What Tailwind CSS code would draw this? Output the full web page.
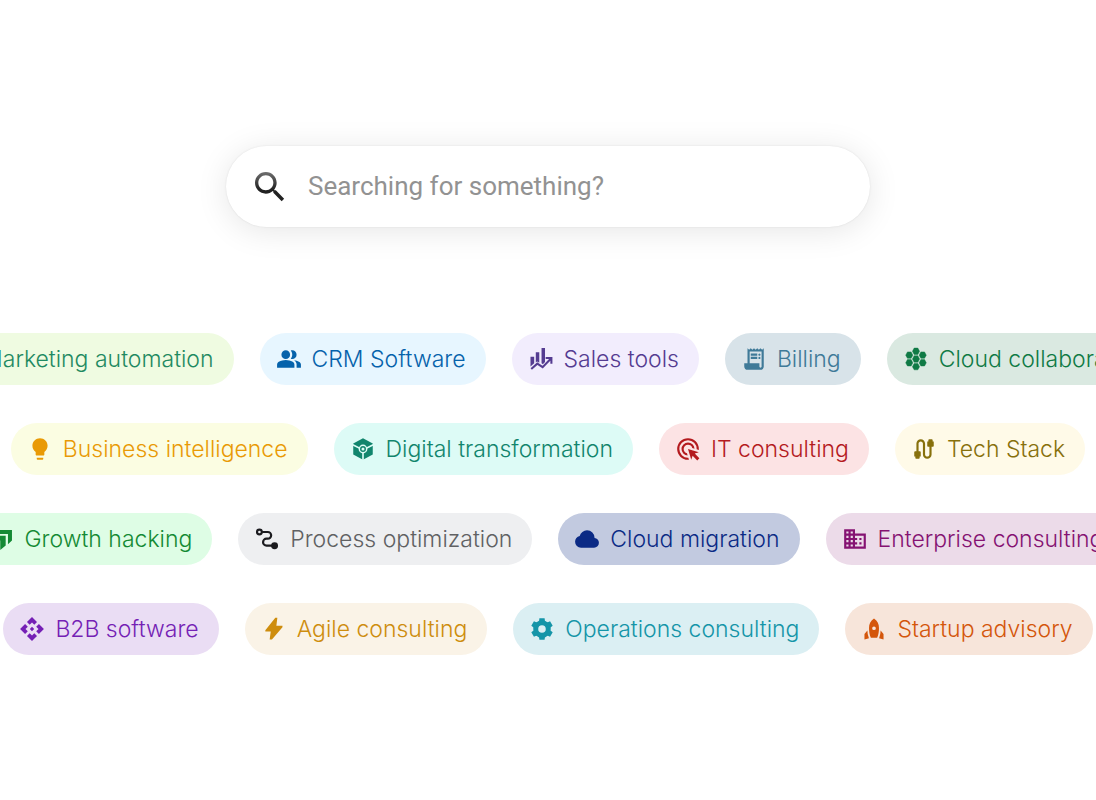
<!DOCTYPE html>
<html lang="en">
<head>
  <meta charset="UTF-8">
  <meta name="viewport" content="width=device-width, initial-scale=1.0">
  <title>Search</title>
  <script src="https://cdn.jsdelivr.net/npm/@tailwindcss/browser@4"></script>
</head>
<body class="bg-white min-h-screen overflow-x-hidden font-['Inter',sans-serif]">
  <main class="pt-[146px] pb-36">

    <!-- Search box -->
    <form class="mx-auto flex h-[81px] w-[644px] max-w-full items-center rounded-full bg-white pl-6 pr-8 shadow-[0_4px_32px_rgba(0,0,0,0.10),0_0_2px_rgba(0,0,0,0.10)]">
      <label for="search" class="shrink-0" aria-label="Search">
        <svg class="size-10" viewBox="0 0 24 24" fill="url(#glass)">
          <defs>
            <linearGradient id="glass" x1="0" y1="0" x2="0" y2="1">
              <stop offset="0" stop-color="#707070"/>
              <stop offset="0.6" stop-color="#222222"/>
            </linearGradient>
          </defs>
          <path d="M15.5 14h-.79l-.28-.27C15.41 12.59 16 11.11 16 9.5 16 5.91 13.09 3 9.5 3S3 5.91 3 9.5 5.91 16 9.5 16c1.61 0 3.09-.59 4.23-1.57l.27.28v.79l5 4.99L20.49 19l-4.99-5zm-6 0C7.01 14 5 11.99 5 9.5S7.01 5 9.5 5 14 7.01 14 9.5 11.99 14 9.5 14z"/>
        </svg>
      </label>
      <input id="search" type="text" placeholder="Searching for something?" class="ml-[18px] min-w-0 flex-1 bg-transparent font-['Roboto',sans-serif] text-[26px] text-[#333333] outline-none placeholder:text-[#929292]">
    </form>

    <!-- Categories -->
    <div class="mt-[106px] flex flex-col gap-[38px] overflow-hidden text-[23px] font-[350] whitespace-nowrap">
      <div class="flex justify-center gap-[26px]">
        <a href="#" class="flex h-[52px] shrink-0 items-center gap-2.5 rounded-full bg-[#effbe1] pl-4 pr-5 text-[#1f8a62]">
          <svg class="size-[26px]" viewBox="0 0 24 24" fill="currentColor"><path d="M18 13v-2h4v2zm1.200 7L16 17.600l1.200-1.600 3.200 2.400zM17.200 8 16 6.400 19.200 4l1.200 1.600zM5 19v-4H4q-.825 0-1.412-.587T2 13v-2q0-.825.588-1.412T4 9h4l5-3v12l-5-3H7v4zm9-3.650v-6.700q.675.600 1.088 1.463T15.500 12t-.412 1.888T14 15.350"/></svg>
          Marketing automation
        </a>
        <a href="#" class="flex h-[52px] shrink-0 items-center gap-2.5 rounded-full bg-[#e7f6ff] pl-4 pr-5 text-[#0562ab]">
          <svg class="size-[26px]" viewBox="0 0 24 24" fill="currentColor"><path d="M1 20v-2.800q0-.85.438-1.563T2.600 14.550q1.550-.775 3.150-1.162T9 13t3.250.388 3.150 1.162q.725.375 1.163 1.088T17 17.200V20zm18 0v-3q0-1.100-.612-2.113T16.650 13.150q1.275.15 2.400.513t2.100.887q.9.500 1.375 1.112T23 17v3zM9 12q-1.650 0-2.825-1.175T5 8t1.175-2.825T9 4t2.825 1.175T13 8t-1.175 2.825T9 12m10-4q0 1.650-1.175 2.825T15 12q-.275 0-.7-.062t-.7-.138q.675-.8 1.038-1.775T15 8t-.363-2.025T13.600 4.200q.35-.125.7-.163T15 4q1.650 0 2.825 1.175T19 8"/></svg>
          CRM Software
        </a>
        <a href="#" class="flex h-[52px] shrink-0 items-center gap-2.5 rounded-full bg-[#f2edfd] pl-4 pr-5 text-[#553c91]">
          <svg class="size-[26px]" viewBox="0 0 24 24" fill="currentColor"><path d="M2.300 10h3.400v6l-3.400 3zM7.200 5.800h3.200v9.700l-2-1.200-1.200.9zM12.500 1.800h3.200v13l-2 2-1.200-.8z"/><path d="m3 21.300 5.600-5 4.900 3.200 7.500-7.700M16.300 11h5.300v5.300" fill="none" stroke="currentColor" stroke-width="1.900"/></svg>
          Sales tools
        </a>
        <a href="#" class="flex h-[52px] shrink-0 items-center gap-2.5 rounded-full bg-[#d8e3e9] pl-4 pr-5 text-[#3f7a98]">
          <svg class="size-[26px]" viewBox="0 0 24 24" fill="currentColor"><path d="M6 22q-1.250 0-2.125-.875T3 19v-3h3V2l1.500 1.500L9 2l1.500 1.500L12 2l1.500 1.500L15 2l1.500 1.500L18 2l1.500 1.500L21 2v17q0 1.250-.875 2.125T18 22zm12-2q.425 0 .713-.288T19 19V5H8v11h9v3q0 .425.288.713T18 20M9 9V7h6v2zm0 3v-2h6v2zm8-3q-.425 0-.712-.288T16 8t.288-.712T17 7t.713.288T18 8t-.288.713T17 9m0 3q-.425 0-.712-.288T16 11t.288-.712T17 10t.713.288T18 11t-.288.713T17 12"/></svg>
          Billing
        </a>
        <a href="#" class="flex h-[52px] shrink-0 items-center gap-2.5 rounded-full bg-[#dae9e1] pl-4 pr-5 text-[#0f7a45]">
          <svg class="size-[26px]" viewBox="0 0 24 24" fill="currentColor"><path id="cell" d="M10.300 1.900h3.400L15.300 4.900 13.700 7.800h-3.400L8.700 4.900z" stroke="currentColor" stroke-width="0.400" stroke-linejoin="round"/><use href="#cell" y="7.100"/><use href="#cell" y="14.200"/><use href="#cell" x="-6.200" y="3.550"/><use href="#cell" x="6.200" y="3.550"/><use href="#cell" x="-6.200" y="10.650"/><use href="#cell" x="6.200" y="10.650"/></svg>
          Cloud collaboration
        </a>
      </div>

      <div class="flex justify-center gap-[26px]">
        <a href="#" class="flex h-[52px] shrink-0 items-center gap-2.5 rounded-full bg-[#fbfde2] pl-4 pr-5 text-[#e99a05]">
          <svg class="size-[26px]" viewBox="0 0 24 24" fill="currentColor"><path d="M9 21c0 .5.400 1 1 1h4c.6 0 1-.5 1-1v-1H9v1zm3-19C8.100 2 5 5.100 5 9c0 2.400 1.200 4.500 3 5.700V17c0 .5.400 1 1 1h6c.6 0 1-.5 1-1v-2.300c1.800-1.300 3-3.400 3-5.700 0-3.900-3.100-7-7-7z"/></svg>
          Business intelligence
        </a>
        <a href="#" class="flex h-[52px] shrink-0 items-center gap-2.5 rounded-full bg-[#ddfbf6] pl-4 pr-5 text-[#11856d]">
          <svg class="size-[26px]" viewBox="0 0 24 24" fill="currentColor"><path d="m12 2 9 5v10l-9 5-9-5V7z"/><path d="M2.500 8 12 12.800 21.500 8M12 12v10.500" fill="none" stroke="#ddfbf6" stroke-width="1.500"/><circle cx="12" cy="12" r="3.400" stroke="#ddfbf6" stroke-width="1.300"/><circle cx="12" cy="12" r="1.400" fill="#ddfbf6"/></svg>
          Digital transformation
        </a>
        <a href="#" class="flex h-[52px] shrink-0 items-center gap-2.5 rounded-full bg-[#fce3e4] pl-4 pr-5 text-[#b41a1e]">
          <svg class="size-[26px]" viewBox="0 0 24 24" fill="currentColor"><path d="M11.700 18q-2.400-.125-4.050-1.850T6 12q0-2.500 1.750-4.250T12 6q2.425 0 4.150 1.650T18 11.700l-2.100-.625q-.325-1.350-1.400-2.212T12 8q-1.650 0-2.825 1.175T8 12q0 1.425.863 2.500t2.212 1.400zm1.200 3.950q-.225.05-.45.05H12q-2.075 0-3.900-.788t-3.175-2.137T2.788 15.900 2 12t.788-3.900 2.137-3.175T8.100 2.788 12 2t3.900.788 3.175 2.137T21.213 8.100 22 12v.45q0 .225-.05.45L20 12.300V12q0-3.350-2.325-5.675T12 4 6.325 6.325 4 12t2.325 5.675T12 20h.3zm7.625.55-4.275-4.275L15 22l-3-10 10 3-3.775 1.250 4.275 4.275z"/></svg>
          IT consulting
        </a>
        <a href="#" class="flex h-[52px] shrink-0 items-center gap-2.5 rounded-full bg-[#fffae8] pl-4 pr-5 text-[#87700c]">
          <svg class="size-[26px]" viewBox="0 0 24 24" fill="currentColor"><path d="M20 5V4c0-.55-.45-1-1-1h-2c-.55 0-1 .45-1 1v1h-1v4c0 .55.450 1 1 1h1v7c0 1.100-.9 2-2 2s-2-.9-2-2V7c0-2.210-1.790-4-4-4S5 4.790 5 7v7H4c-.55 0-1 .45-1 1v4h1v1c0 .55.450 1 1 1h2c.55 0 1-.45 1-1v-1h1v-4c0-.55-.45-1-1-1H7V7c0-1.100.9-2 2-2s2 .9 2 2v10c0 2.210 1.790 4 4 4s4-1.790 4-4v-7h1c.55 0 1-.45 1-1V5h-1z"/></svg>
          Tech Stack
        </a>
      </div>

      <div class="flex justify-center gap-[26px]">
        <a href="#" class="flex h-[52px] shrink-0 items-center gap-2.5 rounded-full bg-[#defde5] pl-4 pr-5 text-[#148a34]">
          <svg class="size-[26px]" viewBox="0 0 24 24" fill="currentColor"><path d="M8 3.700h13.200v9.600l-3.700 3.500V7.400H4.300zM2.500 8.900h12.900v9l-5 4.300v-8.800H2.500z"/></svg>
          Growth hacking
        </a>
        <a href="#" class="flex h-[52px] shrink-0 items-center gap-2.5 rounded-full bg-[#eeeff1] pl-4 pr-5 text-[#606163]">
          <svg class="size-[26px] text-[#1b1b1f]" viewBox="0 0 24 24" fill="none" stroke="currentColor" stroke-width="2"><circle cx="5" cy="5.500" r="2.200"/><path d="M7.500 5.500h5.250a3.100 3.100 0 0 1 0 6.200h-1.200a3.200 3.200 0 0 0 0 6.400H17"/><circle cx="19" cy="18.200" r="2.200" fill="currentColor"/></svg>
          Process optimization
        </a>
        <a href="#" class="flex h-[52px] shrink-0 items-center gap-2.5 rounded-full bg-[#c2cae0] pl-4 pr-5 text-[#0b2a85]">
          <svg class="size-[26px]" viewBox="0 0 24 24" fill="currentColor"><path d="M6.500 20q-2.275 0-3.887-1.575T1 14.575q0-1.950 1.175-3.475T5.250 9.150q.625-2.300 2.500-3.725T12 4q2.925 0 4.963 2.038T19 11q1.725.2 2.863 1.488T23 15.500q0 1.875-1.312 3.188T18.500 20z"/></svg>
          Cloud migration
        </a>
        <a href="#" class="flex h-[52px] shrink-0 items-center gap-2.5 rounded-full bg-[#ecdbe9] pl-4 pr-5 text-[#851272]">
          <svg class="size-[26px]" viewBox="0 0 24 24" fill="currentColor"><path d="M2 21V3h10v4h10v14zm2-2h2v-2H4zm0-4h2v-2H4zm0-4h2V9H4zm0-4h2V5H4zm4 12h2v-2H8zm0-4h2v-2H8zm0-4h2V9H8zm0-4h2V5H8zm4 12h8V9h-8v2h2v2h-2v2h2v2h-2zm4-6v-2h2v2zm0 4v-2h2v2z"/></svg>
          Enterprise consulting
        </a>
      </div>

      <div class="flex justify-center gap-[26px]">
        <a href="#" class="flex h-[52px] shrink-0 items-center gap-2.5 rounded-full bg-[#eaddf4] pl-4 pr-5 text-[#751fb5]">
          <svg class="size-[26px]" viewBox="0 0 24 24" fill="currentColor"><path d="M14 12l-2 2-2-2 2-2 2 2zm-2-6 2.120 2.120 2.500-2.500L12 1 7.380 5.620l2.500 2.500L12 6zm-6 6 2.120-2.120-2.500-2.500L1 12l4.620 4.620 2.500-2.500L6 12zm12 0-2.120 2.120 2.500 2.500L23 12l-4.620-4.620-2.500 2.500L18 12zm-6 6-2.120-2.120-2.500 2.500L12 23l4.620-4.620-2.500-2.500L12 18z"/></svg>
          B2B software
        </a>
        <a href="#" class="flex h-[52px] shrink-0 items-center gap-2.5 rounded-full bg-[#faf3e7] pl-4 pr-5 text-[#ce8d0e]">
          <svg class="size-[26px]" viewBox="0 0 24 24" fill="currentColor"><path d="M13.200 1.700h1.900l-.9 7.400h5.600v1.200L10.100 21.800H8l1-7.400H4v-1.200z"/></svg>
          Agile consulting
        </a>
        <a href="#" class="flex h-[52px] shrink-0 items-center gap-2.5 rounded-full bg-[#dbeff3] pl-4 pr-5 text-[#1595a8]">
          <svg class="size-[26px]" viewBox="0 0 24 24" fill="currentColor"><circle cx="12" cy="12" r="5.800" fill="none" stroke="currentColor" stroke-width="4.600"/><path id="tooth" d="M9.600 2h4.800l.6 4.500H9z"/><use href="#tooth" transform="rotate(60 12 12)"/><use href="#tooth" transform="rotate(120 12 12)"/><use href="#tooth" transform="rotate(180 12 12)"/><use href="#tooth" transform="rotate(240 12 12)"/><use href="#tooth" transform="rotate(300 12 12)"/></svg>
          Operations consulting
        </a>
        <a href="#" class="flex h-[52px] shrink-0 items-center gap-2.5 rounded-full bg-[#f7e5da] pl-4 pr-5 text-[#d4560b]">
          <svg class="size-[26px]" viewBox="0 0 24 24" fill="currentColor"><path fill-rule="evenodd" d="M12 2.300c3.400 2.200 4.600 5.200 4.600 8.700 0 3.300-.4 6.200-1.700 9H9.100C7.800 17.200 7.400 14.300 7.400 11c0-3.500 1.200-6.500 4.600-8.700zm0 7.300a1.700 1.700 0 1 0 0 3.400 1.700 1.700 0 0 0 0-3.400z"/><path d="M5.900 13.300q0 3.700 1.400 7.200l-4.100 1.200v-5.200zM18.100 13.300q0 3.700-1.400 7.200l4.100 1.200v-5.200z"/></svg>
          Startup advisory
        </a>
      </div>
    </div>

  </main>
</body>
</html>
